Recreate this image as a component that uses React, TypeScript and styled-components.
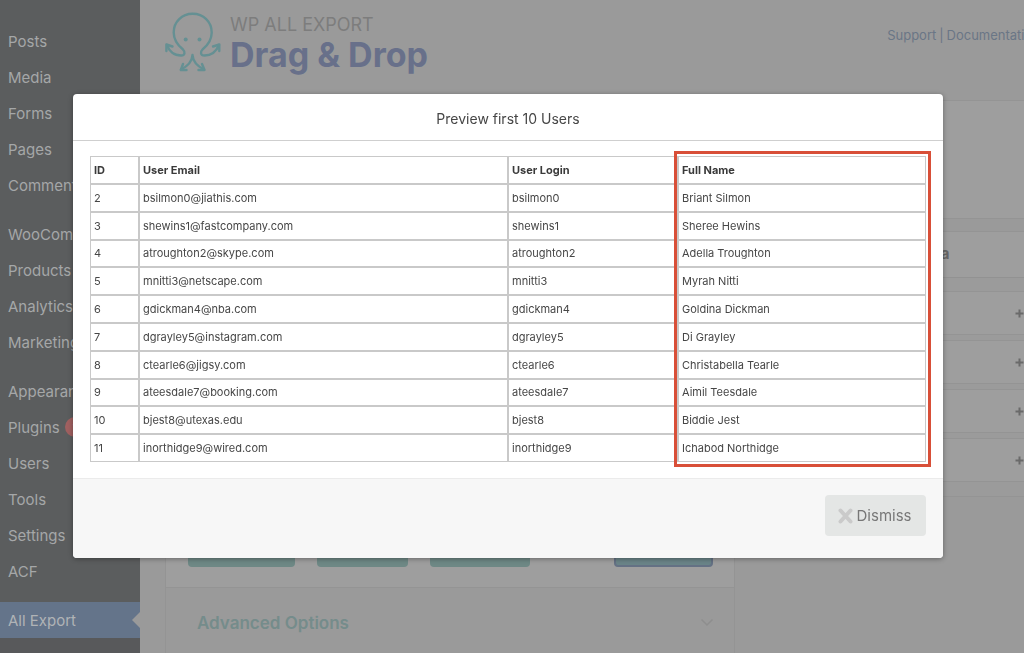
import React from 'react';
import styled, { createGlobalStyle } from 'styled-components';

const GlobalStyle = createGlobalStyle`
  *, *::before, *::after { box-sizing: border-box; }
  body {
    margin: 0;
    background: #9a9a9a;
    color: #3c434a;
    font-family: Inter, "Liberation Sans", sans-serif;
    font-size: 14px;
  }
  a { color: inherit; text-decoration: none; }
  h1, h2, h3, p, ul { margin: 0; padding: 0; }
`;

const Page = styled.div`
  display: flex;
  height: 100vh;
  overflow: hidden;
`;

const Sidebar = styled.nav`
  flex: 0 0 140px;
  display: flex;
  flex-direction: column;
  gap: 13px;
  padding-top: 23px;
  background: #5b5d5e;
  overflow: hidden;
`;

const MenuGroup = styled.ul`
  list-style: none;
`;

const MenuLink = styled.a<{ $active?: boolean }>`
  position: relative;
  display: flex;
  align-items: center;
  gap: 5px;
  height: 36px;
  padding-left: 8px;
  font-size: 15px;
  color: ${p => (p.$active ? '#b0b3b6' : '#a5a7a8')};
  background: ${p => (p.$active ? '#64748a' : 'transparent')};

  &::after {
    content: ${p => (p.$active ? '""' : 'none')};
    position: absolute;
    right: 0;
    top: 10px;
    border: 8px solid transparent;
    border-left: 0;
    border-right-color: #9a9a9a;
  }
`;

const Submenu = styled.div`
  flex: 1 0 40px;
  margin-top: -13px;
  background: #58595b;
`;

const Count = styled.span`
  display: grid;
  place-items: center;
  width: 20px;
  height: 20px;
  border-radius: 50%;
  background: #a06060;
  color: #b5a0a0;
  font-size: 11px;
`;

const Main = styled.main`
  flex: 1 0 910px;
  padding-left: 25px;
`;

const Header = styled.header`
  display: flex;
  align-items: flex-start;
  gap: 9px;
  height: 100px;
  padding: 12px 0 0;
`;

const Brand = styled.div`
  display: flex;
  flex-direction: column;
  padding-top: 3px;
`;

const BrandSmall = styled.p`
  font-size: 18px;
  line-height: 20px;
  color: #7d7d7d;
`;

const BrandTitle = styled.h1`
  font-size: 34px;
  line-height: 40px;
  font-weight: 700;
  color: #68708a;
`;

const HelpLinks = styled.div`
  display: flex;
  gap: 3px;
  margin-left: auto;
  padding: 14px 10px 0 0;
  line-height: 18px;
  font-size: 13px;
  color: #6a7686;
`;

const Columns = styled.div`
  display: grid;
  grid-template-columns: 570px 1fr;
  gap: 20px;
  align-items: start;
`;

const Panel = styled.section`
  border: 1px solid #949494;
  background: #9e9e9e;
`;

const Editor = styled.div`
  display: flex;
  align-items: flex-end;
  gap: 22px;
  height: 486px;
  padding: 0 21px 20px 22px;
`;

const ToolButton = styled.button<{ $width: number; $focused?: boolean }>`
  width: ${p => p.$width}px;
  height: 40px;
  margin-left: ${p => (p.$focused ? 'auto' : '0')};
  border: ${p => (p.$focused ? '2px solid #647184' : '0')};
  border-radius: 4px;
  background: ${p => (p.$focused ? '#6a8488' : '#6e8885')};
`;

const Advanced = styled.div`
  display: flex;
  align-items: center;
  justify-content: space-between;
  height: 70px;
  padding: 0 20px 0 31px;
  border-top: 1px solid #949494;
  background: #9a9a9a;
`;

const AdvancedTitle = styled.h2`
  font-size: 17px;
  font-weight: 600;
  color: #758c8b;
`;

const Side = styled.aside`
  display: flex;
  flex-direction: column;
  gap: 12px;
`;

const Summary = styled(Panel)`
  height: 119px;
`;

const DataTitle = styled.h2`
  height: 46px;
  padding-left: 89px;
  line-height: 44px;
  font-size: 15px;
  font-weight: 700;
  color: #666666;
  border-bottom: 1px solid #929292;
`;

const DataList = styled.div`
  display: flex;
  flex-direction: column;
  gap: 5px;
  padding: 13px 16px 14px;
  background: #9b9b9b;
`;

const DataItem = styled.button`
  display: flex;
  align-items: center;
  justify-content: flex-end;
  height: 44px;
  padding: 0 8px;
  border: 1px solid #949494;
  background: #9e9e9e;
`;

const Overlay = styled.div`
  position: fixed;
  inset: 0;
  display: flex;
  align-items: flex-start;
  padding: 94px 81px 0 73px;
`;

const Dialog = styled.div`
  flex: 1;
  border-radius: 4px;
  background: #ffffff;
  box-shadow: 0 1px 5px rgba(0, 0, 0, 0.35);
  overflow: hidden;
`;

const DialogTitle = styled.h2`
  height: 47px;
  border-bottom: 1px solid #cfcfcf;
  line-height: 50px;
  text-align: center;
  font-size: 14px;
  font-weight: 400;
  color: #464646;
`;

const DialogBody = styled.div`
  padding: 15px 17px 16px;
`;

const TableFrame = styled.div`
  position: relative;
`;

const Table = styled.table`
  width: 100%;
  height: 306px;
  table-layout: fixed;
  border-collapse: separate;
  border-spacing: 0;
  font-size: 11px;
  line-height: 16px;
  color: #464646;

  th, td {
    padding: 0 3px;
    border: 1px solid #c9c9c9;
    text-align: left;
    vertical-align: middle;
  }
  th { height: 28px; font-weight: 700; color: #3a3a3a; }
`;

const HeadCell = styled.th<{ $width?: number }>`
  width: ${p => (p.$width ? `${p.$width}px` : 'auto')};
`;

const Highlight = styled.div`
  position: absolute;
  inset: -5px -5px -5px auto;
  width: 257px;
  border: 3px solid #d84f38;
  pointer-events: none;
`;

const DialogFooter = styled.footer`
  display: flex;
  justify-content: flex-end;
  padding: 16px 17px 22px;
  border-top: 1px solid #ebebeb;
  background: #f7f7f7;
`;

const DismissButton = styled.button`
  display: flex;
  align-items: center;
  justify-content: center;
  gap: 4px;
  width: 101px;
  height: 41px;
  padding: 0 2px 0 0;
  border: 0;
  border-radius: 4px;
  background: #e4e6e5;
  font: 400 15px Inter, "Liberation Sans", sans-serif;
  color: #777777;
`;

const menu = [
  ['Posts', 'Media', 'Forms', 'Pages', 'Comments'],
  ['WooCommerce', 'Products', 'Analytics', 'Marketing'],
  ['Appearance', 'Plugins', 'Users', 'Tools', 'Settings', 'ACF'],
  ['All Export'],
];

const users = [
  [2, 'bsilmon0@jiathis.com', 'bsilmon0', 'Briant Silmon'],
  [3, 'shewins1@fastcompany.com', 'shewins1', 'Sheree Hewins'],
  [4, 'atroughton2@skype.com', 'atroughton2', 'Adella Troughton'],
  [5, 'mnitti3@netscape.com', 'mnitti3', 'Myrah Nitti'],
  [6, 'gdickman4@nba.com', 'gdickman4', 'Goldina Dickman'],
  [7, 'dgrayley5@instagram.com', 'dgrayley5', 'Di Grayley'],
  [8, 'ctearle6@jigsy.com', 'ctearle6', 'Christabella Tearle'],
  [9, 'ateesdale7@booking.com', 'ateesdale7', 'Aimil Teesdale'],
  [10, 'bjest8@utexas.edu', 'bjest8', 'Biddie Jest'],
  [11, 'inorthidge9@wired.com', 'inorthidge9', 'Ichabod Northidge'],
];

const Octopus = () => (
  <svg width="56" height="62" viewBox="0 0 56 62" fill="none" stroke="#659093" strokeWidth="2.400" strokeLinecap="round" strokeLinejoin="round" aria-hidden="true">
    <path d="M2 33C4 39 9 43.500 16 43.500C20 43.500 20.500 40 18 37.500C13 33.500 8.700 28 8.700 20.500C8.700 9.500 17 1.800 27.700 1.800S46.700 9.500 46.700 20.500C46.700 28 42.500 33.500 37.500 37.500C35 40 35.500 43.500 39.500 43.500C46.500 43.500 51.500 39 54 33" />
    <path d="M1.400 39V32.500L7.500 34.500M54.300 39V32.500L48 34.500" />
    <path d="M27.500 43C27 50 23 54 16 57.500M27.500 43C28 50 32 54 39 57.500" />
    <path d="M18 52L15.800 58L21.500 58M37 52L39.500 58L33.500 58" />
    <g fill="#659093" stroke="none">
      <circle cx="20.700" cy="27.500" r="2" />
      <circle cx="34.500" cy="27.500" r="2" />
    </g>
  </svg>
);

const Plus = () => (
  <svg width="9" height="9" viewBox="0 0 9 9" stroke="#6a6a6a" strokeWidth="2" aria-hidden="true">
    <path d="M4.500 .5v8M.5 4.500h8" />
  </svg>
);

const Cross = () => (
  <svg width="15" height="16" viewBox="0 0 15 16" stroke="#cacaca" strokeWidth="4" strokeLinecap="round" aria-hidden="true">
    <path d="M2.500 2.500L12.500 13.500M12.500 2.500L2.500 13.500" />
  </svg>
);

export default function App() {
  return (
    <>
      <GlobalStyle />
      <Page>
        <Sidebar>
          {menu.map(group => (
            <MenuGroup key={group[0]}>
              {group.map(label => (
                <li key={label}>
                  <MenuLink href="#" $active={label === 'All Export'}>
                    {label}
                    {label === 'Plugins' && <Count>1</Count>}
                  </MenuLink>
                </li>
              ))}
            </MenuGroup>
          ))}
          <Submenu />
        </Sidebar>
        <Main>
          <Header>
            <Octopus />
            <Brand>
              <BrandSmall>WP ALL EXPORT</BrandSmall>
              <BrandTitle>Drag &amp; Drop</BrandTitle>
            </Brand>
            <HelpLinks>
              <a href="#">Support</a>
              <span>|</span>
              <a href="#">Documentation</a>
            </HelpLinks>
          </Header>
          <Columns>
            <Panel>
              <Editor>
                <ToolButton $width={107} aria-label="Add field" />
                <ToolButton $width={91} aria-label="Add all" />
                <ToolButton $width={100} aria-label="Clear all" />
                <ToolButton $width={99} $focused aria-label="Preview" />
              </Editor>
              <Advanced>
                <AdvancedTitle>Advanced Options</AdvancedTitle>
                <svg width="14" height="9" viewBox="0 0 14 9" fill="none" stroke="#8e8e8e" strokeWidth="1.500" aria-hidden="true">
                  <path d="M1.500 1.500L7 7L12.500 1.500" />
                </svg>
              </Advanced>
            </Panel>
            <Side>
              <Summary />
              <Panel>
                <DataTitle>Available Data</DataTitle>
                <DataList>
                  {['Standard', 'Media', 'Other', 'Custom Fields'].map(name => (
                    <DataItem key={name} aria-label={name}><Plus /></DataItem>
                  ))}
                </DataList>
              </Panel>
            </Side>
          </Columns>
        </Main>
      </Page>
      <Overlay>
        <Dialog role="dialog" aria-labelledby="preview-title">
          <DialogTitle id="preview-title">Preview first 10 Users</DialogTitle>
          <DialogBody>
            <TableFrame>
              <Table>
                <thead>
                  <tr>
                    <HeadCell $width={49}>ID</HeadCell>
                    <HeadCell>User Email</HeadCell>
                    <HeadCell $width={170}>User Login</HeadCell>
                    <HeadCell $width={248}>Full Name</HeadCell>
                  </tr>
                </thead>
                <tbody>
                  {users.map(row => (
                    <tr key={row[0]}>
                      {row.map(value => <td key={value}>{value}</td>)}
                    </tr>
                  ))}
                </tbody>
              </Table>
              <Highlight />
            </TableFrame>
          </DialogBody>
          <DialogFooter>
            <DismissButton type="button"><Cross />Dismiss</DismissButton>
          </DialogFooter>
        </Dialog>
      </Overlay>
    </>
  );
}
